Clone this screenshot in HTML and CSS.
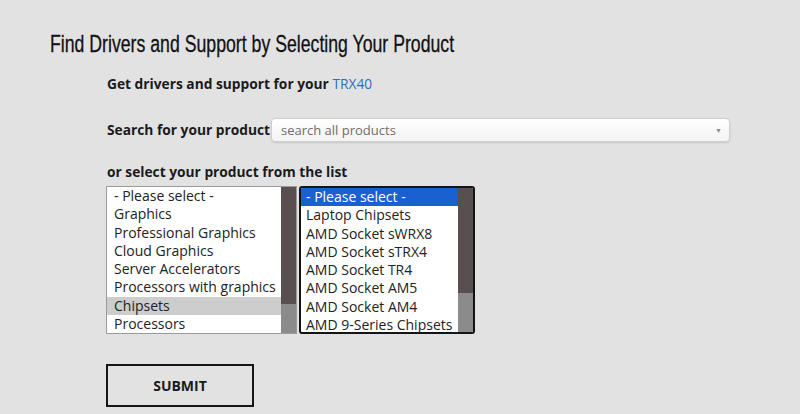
FILE: index.html
```html
<!DOCTYPE html>
<html>
<head>
<meta charset="utf-8">
<link rel="stylesheet" href="styles.css">
</head>
<body>
<div class="page">
  <h1 class="title">Find Drivers and Support by Selecting Your Product</h1>
  <div class="content">
    <p class="intro">Get drivers and support for your <a class="link" href="#">TRX40</a></p>
    <div class="search-row">
      <label class="label">Search for your product</label>
      <div class="search-select">
        <span class="placeholder">search all products</span>
        <span class="arrow">&#9660;</span>
      </div>
    </div>
    <p class="label list-label">or select your product from the list</p>
    <div class="lists">
      <div class="listbox lb-one">
        <ul class="options">
          <li>- Please select -</li>
          <li>Graphics</li>
          <li>Professional Graphics</li>
          <li>Cloud Graphics</li>
          <li>Server Accelerators</li>
          <li>Processors with graphics</li>
          <li class="sel-gray">Chipsets</li>
          <li>Processors</li>
        </ul>
        <div class="scrollbar"><div class="thumb thumb-one"></div><div class="track"></div></div>
      </div>
      <div class="listbox lb-two">
        <ul class="options">
          <li class="sel-blue">- Please select -</li>
          <li>Laptop Chipsets</li>
          <li>AMD Socket sWRX8</li>
          <li>AMD Socket sTRX4</li>
          <li>AMD Socket TR4</li>
          <li>AMD Socket AM5</li>
          <li>AMD Socket AM4</li>
          <li>AMD 9-Series Chipsets</li>
        </ul>
        <div class="scrollbar"><div class="thumb thumb-two"></div><div class="track"></div></div>
      </div>
    </div>
    <button class="submit">SUBMIT</button>
  </div>
</div>
</body>
</html>
```
FILE: styles.css
```css
html, body {
  margin: 0;
  padding: 0;
}
body {
  background: #e2e2e3;
  font-family: "Open Sans", "Noto Sans", sans-serif;
  color: #1a1a1a;
  width: 800px;
  height: 414px;
  overflow: hidden;
}
.page {
  padding: 29px 0 0 50px;
}
.title {
  margin: 0;
  font-family: "Liberation Sans", "Arial", sans-serif;
  font-weight: normal;
  font-size: 24.5px;
  line-height: 30px;
  color: #111;
  white-space: nowrap;
  transform: scaleX(0.722);
  transform-origin: left center;
  -webkit-text-stroke: 0.3px #111;
}
.content {
  padding-left: 57px;
}
.intro {
  margin: 15px 0 0;
  font-size: 13.75px;
  line-height: 20px;
  font-weight: 700;
}
.link {
  font-weight: 400;
  color: #2b6fc0;
  text-decoration: none;
}
.search-row {
  margin-top: 24px;
  display: flex;
  align-items: center;
  gap: 1px;
  height: 24px;
}
.label {
  font-size: 13.75px;
  font-weight: 700;
  line-height: 20px;
}
.search-select {
  width: 439px;
  height: 22px;
  border: 1px solid #cfcfcf;
  border-radius: 4px;
  background: linear-gradient(#ffffff, #f3f3f3);
  box-shadow: 0 1px 2px rgba(0,0,0,0.12);
  display: flex;
  align-items: center;
  justify-content: space-between;
  padding: 0 9px;
  box-sizing: content-box;
}
.placeholder {
  font-size: 13px;
  color: #6e6e6e;
}
.arrow {
  font-size: 7px;
  color: #8a8a8a;
  margin-right: -2px;
}
.list-label {
  margin: 20px 0 0;
}
.lists {
  margin-top: 4px;
  display: flex;
  gap: 2px;
  margin-left: -1px;
}
.listbox {
  display: flex;
  background: #fff;
  box-sizing: border-box;
  height: 148px;
  overflow: hidden;
}
.lb-one {
  width: 191px;
  border: 1px solid #9a9a9a;
}
.lb-two {
  width: 176px;
  border: 2px solid #141414;
  border-radius: 3px;
}
.options {
  list-style: none;
  margin: 0;
  padding: 0;
  flex: 1;
}
.options li {
  font-size: 14px;
  line-height: 18.25px;
  height: 18.25px;
  white-space: nowrap;
  color: #222;
}
.lb-one .options li {
  padding-left: 7px;
}
.lb-two .options li {
  padding-left: 5px;
}
.sel-gray {
  background: #cdcdcd;
}
.options li.sel-blue {
  background: #1b60d1;
  color: #fff;
}
.scrollbar {
  width: 15px;
  display: flex;
  flex-direction: column;
}
.thumb {
  background: #574f50;
}
.thumb-one {
  height: 117px;
}
.thumb-two {
  height: 105px;
}
.track {
  flex: 1;
  background: #8b8b8b;
}
.submit {
  margin-top: 30px;
  margin-left: -1px;
  width: 148px;
  height: 43px;
  border: 2px solid #161616;
  background: transparent;
  font-family: "Open Sans", sans-serif;
  font-weight: 700;
  font-size: 14px;
  color: #1a1a1a;
  padding: 0;
  display: block;
}
```
